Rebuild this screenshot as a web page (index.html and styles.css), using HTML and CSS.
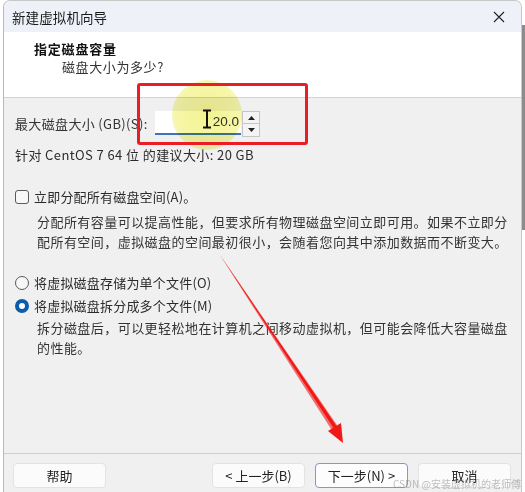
FILE: index.html
```html
<!DOCTYPE html>
<html lang="zh-CN">
<head>
<meta charset="utf-8">
<link rel="stylesheet" href="styles.css">
</head>
<body>
<div class="window">
  <div class="titlebar">
    <span class="title">新建虚拟机向导</span>
    <svg class="close" width="12" height="12" viewBox="0 0 12 12"><path d="M1 1L11 11M11 1L1 11" stroke="#222" stroke-width="1.1" fill="none"/></svg>
  </div>
  <div class="header">
    <div class="h-title">指定磁盘容量</div>
    <div class="h-sub">磁盘大小为多少?</div>
  </div>
  <div class="content">
    <div class="row size-row">
      <span class="label">最大磁盘大小 (GB)(S):</span>
      <div class="spin">
        <div class="spin-input">20.0</div>
        <div class="spin-btns">
          <div class="spin-btn"><svg width="7" height="4" viewBox="0 0 7 4"><path d="M0 4L3.5 0L7 4Z" fill="#222"/></svg></div>
          <div class="spin-btn"><svg width="7" height="4" viewBox="0 0 7 4"><path d="M0 0L3.5 4L7 0Z" fill="#222"/></svg></div>
        </div>
      </div>
    </div>
    <div class="row rec">针对 CentOS 7 64 位 的建议大小: 20 GB</div>
    <div class="row check-row"><span class="checkbox"></span><span>立即分配所有磁盘空间(A)。</span></div>
    <div class="desc d1">分配所有容量可以提高性能，但要求所有物理磁盘空间立即可用。如果不立即分<br>配所有空间，虚拟磁盘的空间最初很小，会随着您向其中添加数据而不断变大。</div>
    <div class="row radio-row r1"><span class="radio"></span><span>将虚拟磁盘存储为单个文件(O)</span></div>
    <div class="row radio-row r2"><span class="radio on"></span><span>将虚拟磁盘拆分成多个文件(M)</span></div>
    <div class="desc d2">拆分磁盘后，可以更轻松地在计算机之间移动虚拟机，但可能会降低大容量磁盘<br>的性能。</div>
  </div>
  <div class="footer">
    <button class="btn">帮助</button>
    <div class="spacer"></div>
    <button class="btn">&lt; 上一步(B)</button>
    <button class="btn focus">下一步(N) &gt;</button>
    <button class="btn">取消</button>
  </div>
</div>
<div class="edge"></div>
<div class="highlight"></div>
<div class="redbox"></div>
<svg class="ibeam" width="12" height="20" viewBox="0 0 12 20"><path d="M2 1.5H10M6 1.5V18.5M2 18.5H10" stroke="#111" stroke-width="2" fill="none"/></svg>
<svg class="arrow" width="525" height="492" viewBox="0 0 525 492">
  <path d="M220 255 L335.5 431 L338.5 429 Z" fill="#f01818"/>
  <path d="M220 255 L333 432 L339 428 Z" fill="#f01818" opacity="0.6"/>
  <path d="M343 443 L328 431 L341 423 Z" fill="#f01818"/>
</svg>
<div class="watermark">CSDN @安装虚拟机的老师傅</div>
</body>
</html>
```
FILE: styles.css
```css
* { box-sizing: border-box; }
html, body { margin: 0; padding: 0; }
body {
  width: 525px;
  height: 492px;
  overflow: hidden;
  background: #ffffff;
  position: relative;
  font-family: "Noto Sans CJK SC", "Noto Sans", sans-serif;
  font-size: 13px;
  color: #2b2b2b;
}
.window {
  margin-left: 3px;
  width: 519px;
  height: 492px;
  border-left: 1px solid #b9b9b9;
  border-top: 1px solid #c8c8c8;
  border-right: 1px solid #c8c8c8;
  border-top-left-radius: 7px;
  border-top-right-radius: 7px;
  overflow: hidden;
  display: flex;
  flex-direction: column;
  background: #f0f0f0;
}
.titlebar {
  height: 31px;
  background: #eef2f8;
  display: flex;
  align-items: center;
  justify-content: space-between;
  padding: 0 16px 0 8px;
}
.title { font-size: 13.5px; color: #1a1a1a; letter-spacing: 0.1px; }
.close { display: block; }
.header {
  height: 66px;
  background: #ffffff;
  border-bottom: 1px solid #d2d2d2;
  padding: 8px 0 0 30px;
}
.h-title { font-weight: bold; font-size: 13px; line-height: 18px; color: #111; letter-spacing: 0.8px; }
.h-sub { padding-left: 28px; line-height: 18px; margin-top: 0; color: #333; letter-spacing: 0.6px; }
.content {
  flex: 1;
  padding: 13px 0 0 11px;
}
.row { display: flex; align-items: center; line-height: 18px; }
.size-row { height: 26px; }
.label { width: 140px; color: #333; letter-spacing: 0.35px; white-space: nowrap; }
.spin { display: flex; align-items: flex-start; height: 26px; }
.spin-input {
  width: 86px;
  height: 24px;
  background: #ffffff;
  border-bottom: 2px solid #3d74bf;
  text-align: right;
  padding-right: 2px;
  line-height: 22px;
  color: #333;
  font-family: "Liberation Sans", sans-serif;
  font-size: 13.5px;
}
.spin-btns { display: flex; flex-direction: column; margin-left: 1px; }
.spin-btn {
  width: 18px;
  height: 13px;
  background: #f4f4f4;
  border: 1px solid #c6c6c6;
  display: flex;
  align-items: center;
  justify-content: center;
}
.spin-btn + .spin-btn { border-top: none; }
.rec { margin-top: 9px; letter-spacing: 0.4px; }
.check-row { margin-top: 24px; }
.checkbox {
  width: 14px; height: 14px;
  border: 1px solid #5a5a5a;
  border-radius: 3px;
  background: #f7f7f7;
  margin-right: 5px;
}
.radio-row span:last-child, .check-row span:last-child { letter-spacing: 0.2px; }
.desc { padding-left: 22px; line-height: 19.5px; white-space: nowrap; color: #333; letter-spacing: 0.45px; }
.d1 { margin-top: 6px; }
.radio-row.r1 { margin-top: 23px; }
.radio-row.r2 { margin-top: 5px; }
.radio {
  width: 14px; height: 14px;
  border: 1px solid #5a5a5a;
  border-radius: 50%;
  background: #f7f7f7;
  margin-right: 5px;
}
.radio.on {
  border: 4px solid #0b5cad;
  background: #ffffff;
}
.d2 { margin-top: 3px; line-height: 20px; }
.footer {
  height: 39px;
  border-top: 1px solid #cfcfcf;
  display: flex;
  align-items: flex-start;
  padding: 9px 10px 0 9px;
  gap: 10px;
}
.spacer { flex: 1; }
.btn {
  width: 93px;
  height: 25px;
  background: #fbfbfb;
  border: 1px solid #e3e3e3;
  border-radius: 4px;
  font-family: "Noto Sans CJK SC", "Noto Sans", sans-serif;
  font-size: 13px;
  color: #222;
  padding: 0;
}
.btn.focus { border: 1px solid #7c9cc4; background: #fdfdfd; }
.edge {
  position: absolute;
  right: 0; top: 25px;
  width: 3px; height: 205px;
  background: #8c8c8c;
}
.highlight {
  position: absolute;
  left: 172px; top: 80px;
  width: 70px; height: 70px;
  border-radius: 50%;
  mix-blend-mode: multiply;
  background: radial-gradient(circle, rgba(240,240,120,0.8) 0%, rgba(242,242,130,0.7) 60%, rgba(245,245,160,0.35) 100%);
}
.redbox {
  position: absolute;
  left: 137px; top: 83px;
  width: 171px; height: 62px;
  border: 3px solid #ec1c24;
  border-radius: 3px;
}
.ibeam { position: absolute; left: 201px; top: 109px; }
.arrow { position: absolute; left: 0; top: 0; pointer-events: none; }
.watermark {
  position: absolute;
  left: 393px; top: 476px;
  font-size: 10px;
  color: rgba(140,140,140,0.55);
  white-space: nowrap;
}
```
